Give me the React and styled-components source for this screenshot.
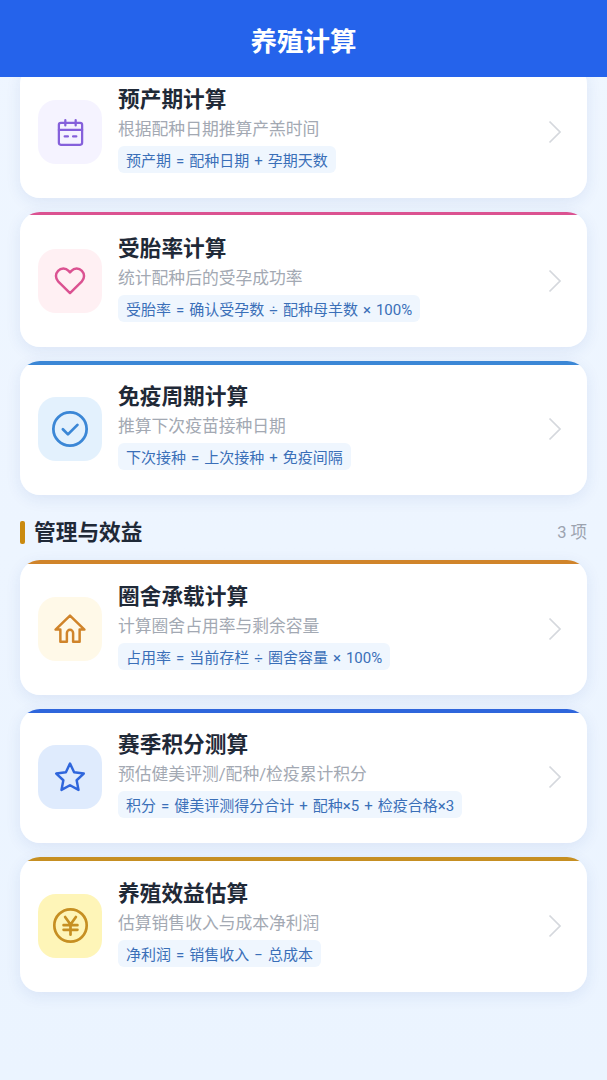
import styled, { createGlobalStyle } from "styled-components";

const GlobalStyle = createGlobalStyle`
    html, body {
        margin: 0;
        padding: 0;
    }
    body {
        font-family: Roboto, "Noto Sans CJK SC", sans-serif;
    }
`

const Page = styled.div`
    position: relative;
    width: 607px;
    height: 1080px;
    overflow: hidden;
    background: linear-gradient(180deg, #eff6ff 0%, #ebf4ff 100%);
`

const Header = styled.header`
    position: absolute;
    top: 0;
    left: 0;
    right: 0;
    z-index: 2;
    height: 77px;
    padding-top: 1px;
    box-sizing: border-box;
    display: flex;
    align-items: center;
    justify-content: center;
    background-color: #2563eb;
    color: #ffffff;
    font-size: 26.5px;
    font-weight: 700;
`

const Content = styled.main`
    padding: 63.5px 20px 0;
    display: flex;
    flex-direction: column;
`

const List = styled.div`
    display: flex;
    flex-direction: column;
    gap: 14px;
`

const Card = styled.div`
    height: 134.5px;
    box-sizing: border-box;
    display: flex;
    align-items: center;
    padding: 3px 25px 0 18px;
    background: linear-gradient(${(p) => p.$accent} 3.5px, #ffffff 3.5px);
    border-radius: 20px;
    box-shadow: 0 4px 16px rgba(37, 70, 150, 0.09);
`

const IconBox = styled.div`
    width: 64px;
    height: 64px;
    flex-shrink: 0;
    display: flex;
    align-items: center;
    justify-content: center;
    border-radius: 18px;
    background-color: ${(p) => p.$bg};
    color: ${(p) => p.$accent};
`

const CardBody = styled.div`
    flex: 1;
    margin-left: 16px;
    padding-bottom: 5px;
    display: flex;
    flex-direction: column;
    align-items: flex-start;
`

const CardTitle = styled.div`
    font-size: 21.7px;
    font-weight: 700;
    line-height: 28px;
    color: #1f2937;
`

const CardDesc = styled.div`
    font-size: 16.8px;
    line-height: 24px;
    margin-top: 3px;
    color: #a3a9b3;
`

const Formula = styled.div`
    margin-top: 5px;
    height: 27px;
    padding: 0 8px;
    display: flex;
    align-items: center;
    border-radius: 6px;
    background-color: #eff6fe;
    color: #3a6fb8;
    font-size: 15px;
    word-spacing: 1.3px;
    white-space: nowrap;
`

const Chevron = styled.svg`
    flex-shrink: 0;
    width: 14px;
    height: 24px;
    fill: none;
    stroke: #d5d8dd;
    stroke-width: 1.75;
`

const SectionRow = styled.div`
    height: 65px;
    padding-top: 8px;
    box-sizing: border-box;
    display: flex;
    align-items: center;
`

const SectionMark = styled.span`
    width: 5px;
    height: 23px;
    margin-top: 2px;
    border-radius: 2px;
    background-color: #ca8a0f;
    margin-right: 9px;
`

const SectionTitle = styled.h2`
    flex: 1;
    margin: 0 0 2px;
    font-size: 21.7px;
    font-weight: 700;
    color: #1f2937;
`

const SectionCount = styled.span`
    margin-bottom: 2px;
    font-size: 16.5px;
    color: #9ca3af;
`

const IconSvg = styled.svg`
    width: ${(p) => p.$size || 32}px;
    height: ${(p) => p.$size || 32}px;
    fill: none;
    stroke: currentColor;
    stroke-width: 1.75;
    stroke-linecap: round;
    stroke-linejoin: round;
`

const CalendarIcon = () => (
    <IconSvg viewBox="0 0 24 24" $size={31}>
        <rect x="3" y="4.5" width="18" height="17" rx="1.5" />
        <path d="M3 10h18M8 2.5v4M16 2.5v4M7.5 15h2.5M14 15h2.5" />
    </IconSvg>
)

const HeartIcon = () => (
    <IconSvg viewBox="0 0 24 24" $size={34}>
        <path d="M12 20.5 3.6 12.2a5.3 5.3 0 0 1 0-7.4 5.2 5.2 0 0 1 7.4 0L12 5.9l1-1.1a5.2 5.2 0 0 1 7.4 0 5.3 5.3 0 0 1 0 7.4z" />
    </IconSvg>
)

const CheckIcon = () => (
    <IconSvg viewBox="0 0 24 24" $size={38}>
        <circle cx="12" cy="12" r="10.5" />
        <path d="m7.5 12.2 3.2 3.2 6-6" />
    </IconSvg>
)

const HouseIcon = () => (
    <IconSvg viewBox="0 0 24 24" $size={34}>
        <path d="M12 2.5 1.8 12.4h3.4v8.6h4.6v-6.2a2.2 2.2 0 0 1 4.4 0V21h4.6v-8.6h3.4z" />
    </IconSvg>
)

const StarIcon = () => (
    <IconSvg viewBox="0 0 24 24" $size={34}>
        <path d="m12 2.5 2.9 6.2 6.8.9-5 4.7 1.3 6.8-6-3.3-6 3.3 1.3-6.8-5-4.7 6.8-.9z" />
    </IconSvg>
)

const YuanIcon = () => (
    <IconSvg viewBox="0 0 24 24" $size={37}>
        <circle cx="12" cy="12" r="10.5" />
        <path d="m8.5 6.5 3.5 4.8 3.5-4.8M7.5 11.8h9M7.5 14.8h9M12 11.5v6.5" />
    </IconSvg>
)

const breedCards = [
    { title: "预产期计算", desc: "根据配种日期推算产羔时间", formula: "预产期 = 配种日期 + 孕期天数", accent: "#8560db", bg: "#f5f3ff", Icon: CalendarIcon },
    { title: "受胎率计算", desc: "统计配种后的受孕成功率", formula: "受胎率 = 确认受孕数 ÷ 配种母羊数 × 100%", accent: "#db5291", bg: "#fff0f3", Icon: HeartIcon },
    { title: "免疫周期计算", desc: "推算下次疫苗接种日期", formula: "下次接种 = 上次接种 + 免疫间隔", accent: "#3b87d6", bg: "#e3f1fd", Icon: CheckIcon },
]

const manageCards = [
    { title: "圈舍承载计算", desc: "计算圈舍占用率与剩余容量", formula: "占用率 = 当前存栏 ÷ 圈舍容量 × 100%", accent: "#d0842a", bg: "#fff9e8", Icon: HouseIcon },
    { title: "赛季积分测算", desc: "预估健美评测/配种/检疫累计积分", formula: "积分 = 健美评测得分合计 + 配种×5 + 检疫合格×3", accent: "#2f66dc", bg: "#dfebfd", Icon: StarIcon },
    { title: "养殖效益估算", desc: "估算销售收入与成本净利润", formula: "净利润 = 销售收入 − 总成本", accent: "#c68f22", bg: "#fef5b8", Icon: YuanIcon },
]

const CalcCard = ({ item }) => (
    <Card $accent={item.accent}>
        <IconBox $bg={item.bg} $accent={item.accent}>
            <item.Icon />
        </IconBox>
        <CardBody>
            <CardTitle>{item.title}</CardTitle>
            <CardDesc>{item.desc}</CardDesc>
            <Formula>{item.formula}</Formula>
        </CardBody>
        <Chevron viewBox="0 0 14 24">
            <path d="M1.5 1.5 12 12 1.5 22.5" />
        </Chevron>
    </Card>
)

const App = () => {
    return (
        <Page>
            <GlobalStyle />
            <Header>养殖计算</Header>
            <Content>
                <List>
                    {breedCards.map((item) => (
                        <CalcCard key={item.title} item={item} />
                    ))}
                </List>
                <SectionRow>
                    <SectionMark />
                    <SectionTitle>管理与效益</SectionTitle>
                    <SectionCount>3 项</SectionCount>
                </SectionRow>
                <List>
                    {manageCards.map((item) => (
                        <CalcCard key={item.title} item={item} />
                    ))}
                </List>
            </Content>
        </Page>
    );
}

export default App;
